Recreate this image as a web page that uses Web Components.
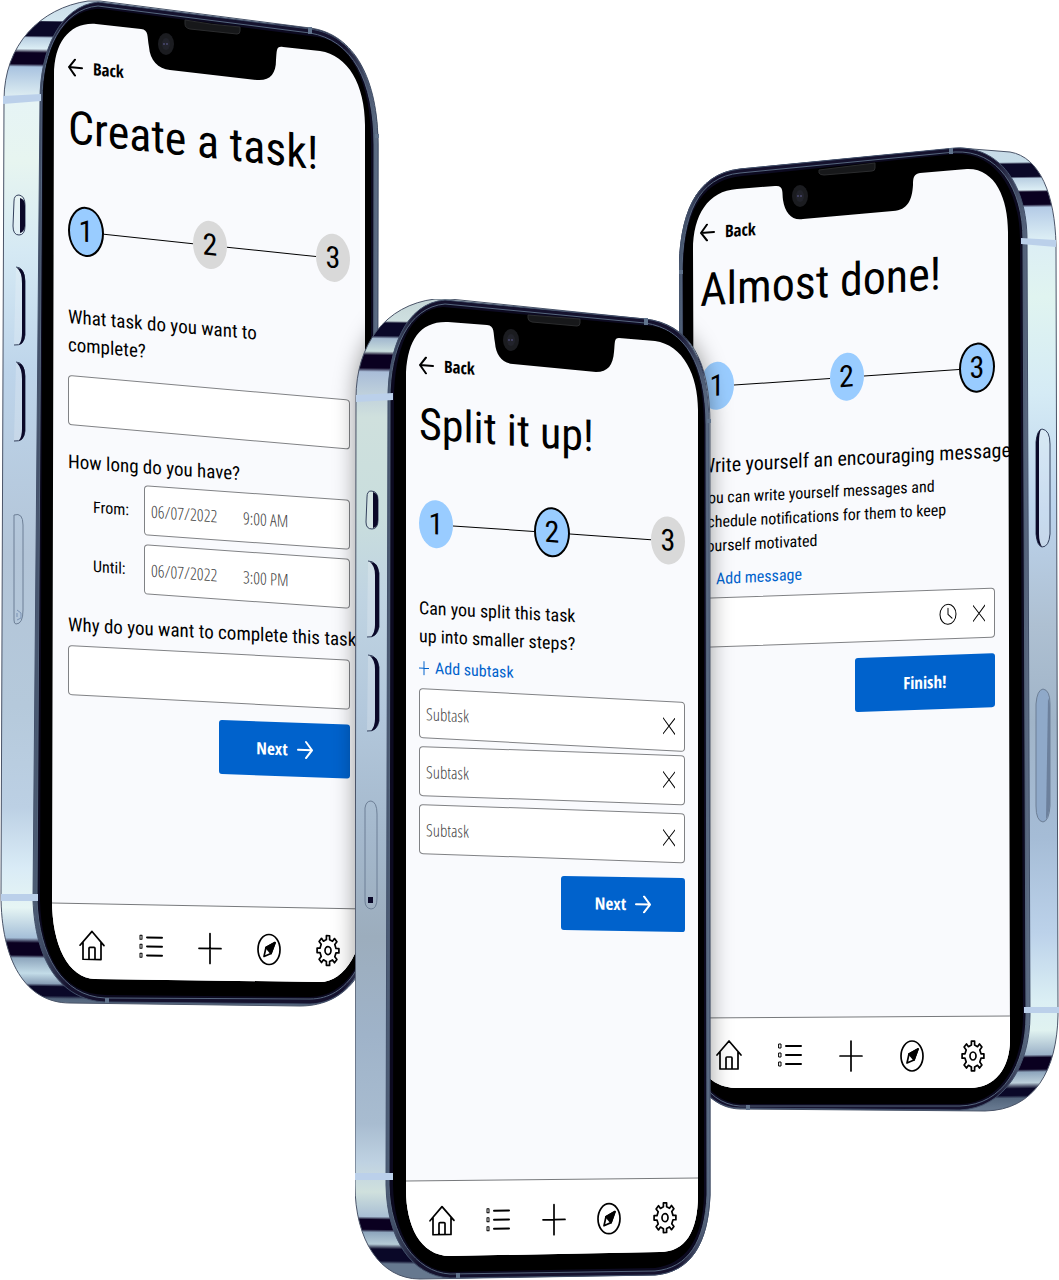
<!DOCTYPE html>
<html lang="en">
<head>
<meta charset="utf-8">
<meta name="viewport" content="width=device-width, initial-scale=1">
<title>Task planner – app screens</title>
<style>
  html, body { margin: 0; background: #fff; }
  body { font-family: "Roboto Condensed", "Open Sans", "Noto Sans", sans-serif; color: #000; }
</style>
</head>
<body>
<app-scene>
  <phone-mockup model="left" style="--q:19px">
    <back-link style="--gap:57px;--tilt:5deg"></back-link>
    <screen-title style="--gap:20px;--tilt:6deg">Create a task!</screen-title>
    <step-track current="1" done="0" style="--gap:48px;--tilt:6deg"></step-track>
    <question-text style="--gap:48px;--tilt:5deg">What task do you want to<br>complete?</question-text>
    <text-field label="What task do you want to complete?" style="--gap:16px;--tilt:5deg"></text-field>
    <question-text style="--gap:23px;--tilt:4deg">How long do you have?</question-text>
    <date-field label="From:" date="06/07/2022" time="9:00 AM" style="--gap:4px;--tilt:4deg"></date-field>
    <date-field label="Until:" date="06/07/2022" time="3:00 PM" style="--gap:9px;--tilt:4deg"></date-field>
    <question-text style="--gap:22px;--tilt:3deg">Why do you want to complete this task?</question-text>
    <text-field label="Why do you want to complete this task?" style="--gap:6px;--tilt:3deg"></text-field>
    <action-button arrow style="--gap:25px;--tilt:2deg;--w:131px">Next</action-button>
    <tab-bar slot="tabs" style="--tilt:1deg;--inset:12px;--inset-end:10px"></tab-bar>
  </phone-mockup>

  <phone-mockup model="right" style="--q:20px">
    <back-link style="--gap:76px;--tilt:-4deg"></back-link>
    <screen-title style="--gap:17px;--tilt:-4deg">Almost done!</screen-title>
    <step-track current="3" done="2" style="--gap:42px;--tilt:-4deg"></step-track>
    <question-text style="--gap:40px;--tilt:-3deg">Write yourself an encouraging message</question-text>
    <note-text style="--gap:7px;--tilt:-3deg">You can write yourself messages and<br>schedule notifications for them to keep<br>yourself motivated</note-text>
    <add-link style="--gap:11px;--tilt:-3deg">Add message</add-link>
    <text-field label="Message" clear clock style="--gap:8px;--tilt:-2deg"></text-field>
    <action-button style="--gap:10px;--tilt:-2deg;--w:140px">Finish!</action-button>
    <tab-bar slot="tabs" style="--tilt:0deg;--inset:17px;--inset-end:10px"></tab-bar>
  </phone-mockup>

  <phone-mockup model="middle" style="--q:18px;--t:44px">
    <back-link style="--gap:56px;--tilt:4deg"></back-link>
    <screen-title style="--gap:19px;--tilt:4deg">Split it up!</screen-title>
    <step-track current="2" done="1" style="--gap:44px;--tilt:4deg"></step-track>
    <question-text style="--gap:46px;--tilt:3deg">Can you split this task<br>up into smaller steps?</question-text>
    <add-link style="--gap:8px;--tilt:3deg">Add subtask</add-link>
    <text-field label="Subtask 1" hint="Subtask" clear style="--gap:10px;--tilt:3deg"></text-field>
    <text-field label="Subtask 2" hint="Subtask" clear style="--gap:8px;--tilt:2deg"></text-field>
    <text-field label="Subtask 3" hint="Subtask" clear style="--gap:8px;--tilt:2deg"></text-field>
    <action-button arrow style="--gap:22px;--tilt:1deg;--w:124px">Next</action-button>
    <tab-bar slot="tabs" style="--tilt:-1deg;--inset:11px;--inset-end:8px"></tab-bar>
  </phone-mockup>
</app-scene>

<script>
const HEAD = '"Roboto Condensed", "Liberation Sans Narrow", Roboto, sans-serif';
const BOLD = '"Open Sans Condensed", "Open Sans", sans-serif';
const LIGHT = '"Open Sans Condensed Light", "Open Sans Condensed", "Open Sans", sans-serif';
const ROW = `
  :host { display: block; margin-top: var(--gap, 0); transform: skewY(var(--tilt, 0deg)); transform-origin: 0 50%; }
  *, *::before { box-sizing: border-box; }
  button, input { font: inherit; color: inherit; background: none; border: 0; padding: 0; margin: 0; }
  svg { display: block; fill: none; stroke: currentColor; stroke-linecap: round; stroke-linejoin: round; }
`;
function define(name, render) {
  customElements.define(name, class extends HTMLElement {
    constructor() { super(); this.attachShadow({ mode: 'open' }); }
    connectedCallback() { this.shadowRoot.innerHTML = render(this); }
  });
}

define('app-scene', () => `
  <style>
    :host { display: block; position: relative; width: 100%; aspect-ratio: 1059 / 1280; overflow: hidden; }
  </style><slot></slot>`);

/* Device artwork: every path is given in scene coordinates. */
const MODELS = {
  left: {
    box: [0, 0, 380, 1008], pad: [68, 30], foot: 46, tone: 'a', shaded: true,
    body: 'M4 100C4 45 40 8 88 1L100 1L310 28C355 34 378 80 378 145L377 900C375 965 350 1006 300 1006L70 1003C25 1003 1 960 1 895Z',
    front: 'M40 100C40 50 60 6 98 2L310 29C355 35 377 80 378 145L377 900C375 960 350 1003 310 1004L105 1002C60 1000 35 960 33 900Z',
    rim: 'M42 100C42 50 62 9 98 6L310 33C352 40 374 80 374 145L373 900C371 960 348 999 310 999L105 998C62 996 39 955 37 900Z',
    black: 'M43 100C43 50 62 12 96 9C102 9 106 9 110 10L318 37C352 42 371 85 371 140L371 900C371 960 345 997 310 997L105 995C62 994 41 955 40 900Z',
    glass: 'M54 75C54 42 70 22 96 24L141 29C149 30 147 36 149 47C150 60 158 69 170 70L257 80C270 81 276 74 276 60C277 50 276 46 283 47L320 51C348 55 365 85 365 125L365 900C365 950 345 982 320 982L95 979C68 978 52 945 52 900Z',
    bar: 'M52 903L370 909V990H52Z', line: 'M52 903L365 909',
    speaker: 'M185 20Q211 25 240 27V31Q240 34 237 34L190 29Q185 28 185 24Z', cam: [166, 44],
    ants: ['M3 96L41 94V101L3 104Z', 'M1 894H38V901H1Z'], marks: ['M310 27v7', 'M375 136h4', 'M107 998v5'],
    keys: [['M14 201Q14 195 19 195Q25 196 25 205V226Q25 235 19 235Q13 235 13 226Z', 'M20 198Q25 199 25 206V226Q24 232 20 233Z'],
           ['M16 267Q24 267 25 281V335Q24 346 14 345', 'M17 268Q25 268 25 281V335Q24 344 19 345Q22 340 22 333V283Q22 272 17 268Z'],
           ['M16 362Q24 362 25 376V431Q24 442 14 441', 'M17 363Q25 363 25 376V431Q24 440 19 441Q22 436 22 429V379Q22 368 17 363Z']],
    slot: 'M14 515Q23 512 23 525V610Q23 624 16 624Q14 624 14 620Z', port: [17, 615]
  },
  middle: {
    box: [355, 299, 356, 981], pad: [64, 26], foot: 42, tone: 'b',
    body: 'M356 398C356 345 385 305 435 299L450 299L645 319C690 324 710 360 710 425L710 1195C708 1245 690 1272 655 1275L420 1279C380 1279 355 1240 355 1185Z',
    front: 'M388 398C388 350 405 303 445 300L645 319C688 324 709 360 709 425L710 1195C708 1245 690 1272 655 1275L450 1278C412 1276 387 1240 386 1185Z',
    rim: 'M390 398C390 350 408 307 445 304L645 323C686 329 706 365 706 425L707 1195C705 1242 688 1268 655 1271L450 1274C415 1272 390 1235 389 1185Z',
    black: 'M394 400C394 350 410 309 443 307L652 326C685 331 704 365 704 425L704 1195C703 1240 685 1264 655 1268L450 1272C415 1270 394 1235 393 1185Z',
    glass: 'M406 372C408 340 420 321 448 322L487 325C495 326 493 332 495 343C496 355 502 363 513 364L596 372C608 372 613 365 614 352C615 342 614 338 619 338L655 341C683 345 698 375 698 410L698 1195C698 1232 685 1252 660 1252L450 1256C420 1256 406 1225 406 1190Z',
    bar: 'M406 1181L698 1178V1258H406Z', line: 'M406 1181L698 1178',
    speaker: 'M528 315L580 319V323Q580 326 577 326L532 322Q528 321 528 318Z', cam: [511, 340],
    ants: ['M356 395L393 393V400L356 402Z', 'M355 1173H393V1180H355Z'], marks: ['M646 318v7', 'M707 421h4', 'M458 1273v5'],
    keys: [['M367 497Q367 491 371 491Q378 491 378 500V520Q378 529 372 529Q366 529 366 522Z', 'M373 492Q378 493 378 500V520Q378 527 373 528Z'],
           ['M368 561Q377 561 379 573V627Q377 638 367 637', 'M370 562Q378 562 379 573V627Q377 636 371 637Q375 632 375 625V575Q375 566 370 562Z'],
           ['M368 655Q377 655 379 667V721Q377 732 367 731', 'M370 656Q378 656 379 667V721Q377 730 371 731Q375 726 375 719V669Q375 660 370 656Z']],
    slot: 'M365 808Q366 801 371 801Q377 802 377 814V898Q377 909 371 909Q365 908 365 901Z', port: [370, 901]
  },
  right: {
    box: [679, 147, 380, 965], pad: [21, 64], foot: 40, tone: 'c', shaded: true,
    body: 'M679 275C679 215 695 174 740 169L960 148L1010 152C1040 157 1055 195 1056 245L1058 1015C1057 1070 1035 1110 985 1111L740 1109C700 1108 681 1060 681 1010Z',
    front: 'M679 275C679 215 695 174 740 169L955 148C1000 146 1027 185 1027 240L1030 1015C1030 1065 1005 1108 960 1110L740 1108C700 1108 681 1060 681 1010Z',
    rim: 'M682 275C682 215 698 177 740 173L955 152C998 150 1023 188 1023 240L1026 1015C1026 1065 1003 1105 960 1106L740 1106C703 1104 684 1060 684 1010Z',
    black: 'M683 275C683 215 700 180 742 176L955 154C995 152 1020 190 1020 240L1023 1015C1023 1065 1000 1103 960 1104L740 1104C705 1102 686 1060 686 1010Z',
    glass: 'M693 250C693 215 708 191 737 189L775 186C784 185 782 192 783 200C785 213 792 221 803 219L893 211C908 210 912 200 913 185C913 177 914 174 920 173L967 169C995 168 1008 198 1008 232L1010 1040C1010 1068 995 1088 970 1088L735 1088C715 1087 700 1075 696 1050Z',
    bar: 'M696 1018L1012 1016V1090H700Z', line: 'M696 1018L1010 1016',
    speaker: 'M819 170L875 163V168Q875 171 872 171L824 175Q820 175 819 173Z', cam: [800, 196],
    ants: ['M1021 238L1056 240V247L1021 244Z', 'M1024 1007H1059V1013H1024Z'], marks: ['M951 148v6', 'M679 272h4', 'M748 1105v5'],
    keys: [['M1042 429Q1050 430 1050 444V534Q1049 547 1042 547Q1037 546 1036 534V442Q1037 430 1042 429Z', 'M1041 429Q1037 432 1036 442V534Q1037 545 1042 547Q1039 542 1039 534V442Q1039 434 1041 429Z']],
    slot: 'M1036 704Q1037 690 1043 689Q1050 690 1050 704V806Q1049 821 1043 822Q1036 821 1036 806Z', solid: true
  }
};
const CHROME = {
  a: [['0','#c9dbe8'],['.02','#d3e6ef'],['.021','#0a0828'],['.035','#0a0828'],['.037','#b9cfe2'],['.048','#dceef5'],['.052','#0a0020'],['.063','#0a0020'],['.066','#a9c3e0'],['.1','#e6f4f5'],['.16','#e7f5f0'],['.25','#d5e9f4'],['.37','#bdd4ea'],['.55','#b3c5d8'],['.7','#b5c9db'],['.8','#bcd0e4'],['.86','#d9ebf6'],['.9','#e6f5f4'],['.93','#a5bfd8'],['.935','#0a0020'],['.947','#0a0020'],['.95','#8ea6bd'],['.965','#c3dce8'],['.975','#8aa0b8'],['.978','#0a0828'],['.987','#0a0828'],['.99','#53657c'],['1','#66788f']],
  b: [['0','#c5d6d8'],['.022','#cfe0e0'],['.024','#0a0828'],['.037','#0a0828'],['.04','#a3b9cf'],['.053','#c9dddd'],['.057','#0a0020'],['.07','#0a0020'],['.074','#a9bdd8'],['.1','#c2d3dc'],['.12','#cfe0dd'],['.22','#c9dedd'],['.3','#c0d4e2'],['.42','#b3c8dc'],['.55','#a4b8cc'],['.65','#9cadbd'],['.75','#9fb3c9'],['.84','#a8bcd0'],['.88','#bfd2e2'],['.91','#cfe0dd'],['.935','#a9bfd4'],['.938','#0a0020'],['.948','#0a0020'],['.951','#8ea6bd'],['.963','#b5cbd6'],['.968','#0a0828'],['.98','#0a0828'],['.983','#66788f'],['1','#66788f']],
  c: [['0','#c9dbe8'],['.02','#c6dce8'],['.022','#0a0828'],['.035','#0a0828'],['.037','#b9cfe2'],['.049','#dceef5'],['.051','#0a0020'],['.064','#0a0020'],['.067','#b4cbe6'],['.1','#dceef5'],['.16','#e0f4f0'],['.26','#d5ebf5'],['.38','#bcd3ec'],['.5','#aec0d2'],['.6','#a0b4c8'],['.72','#a5bcd6'],['.82','#bcd2ea'],['.89','#dbeff4'],['.92','#e0f2f0'],['.945','#9cb2c8'],['.948','#0a0020'],['.96','#0a0020'],['.963','#8ea6bd'],['.974','#bccfda'],['.98','#0a0828'],['.987','#0a0828'],['.99','#53657c'],['1','#66788f']]
};

define('phone-mockup', el => {
  const m = MODELS[el.getAttribute('model')], [x, y, w, h] = m.box;
  const view = `viewBox="${m.box.join(' ')}"`;
  const tilt = m.tone === 'c' ? 12 : -12;
  const [cx, cy] = m.cam;
  return `
  <style>
    :host { position: absolute; isolation: isolate; display: grid; left: ${x / 10.59}%; top: ${y / 12.8}%; width: ${w / 10.59}%; height: ${h / 12.8}%; }
    .art, .ui, .shade { grid-area: 1 / 1; min-width: 0; min-height: 0; }
    svg { display: block; width: 100%; height: 100%; pointer-events: none; }
    .ui { display: flex; flex-direction: column; z-index: 1; padding: 0 ${m.pad[1]}px ${m.foot}px ${m.pad[0]}px; }
    .shade { z-index: 2; }
    .tabs { margin-top: auto; }
  </style>
  <svg class="art" ${view} aria-hidden="true">
    <defs>
      <linearGradient id="chrome" gradientUnits="userSpaceOnUse" x1="${x}" y1="${y}" x2="${x + tilt}" y2="${y + h}">
        ${CHROME[m.tone].map(([o, c]) => `<stop offset="${o}" stop-color="${c}"/>`).join('')}
      </linearGradient>
      <linearGradient id="edge"><stop offset="0" stop-color="#4f6078"/><stop offset=".1" stop-color="#15122e"/><stop offset=".9" stop-color="#15122e"/><stop offset="1" stop-color="#5f7088"/></linearGradient>
      <clipPath id="pane"><path d="${m.glass}"/></clipPath>
    </defs>
    <path d="${m.body}" fill="url(#chrome)" stroke="#4a5468" stroke-width="1"/>
    <path d="${m.front}" fill="url(#edge)" stroke="#42506a" stroke-width="1"/>
    <path d="${m.rim}" fill="#0c0a20" stroke="#56677e" stroke-width="1"/>
    <path d="${m.black}" fill="#000"/>
    ${m.ants.map(d => `<path d="${d}" fill="#bbd0ea"/>`).join('')}
    ${m.marks.map(d => `<path d="${d}" stroke="#60738c" stroke-width="4"/>`).join('')}
    <path d="${m.glass}" fill="#f9fafd"/>
    <g clip-path="url(#pane)"><path d="${m.bar}" fill="#fff"/><path d="${m.line}" fill="none" stroke="#77797c" stroke-width="1"/></g>
    <path d="${m.speaker}" fill="#17181a" stroke="#2b2c2e" stroke-width="1"/>
    <ellipse cx="${cx}" cy="${cy}" rx="8" ry="11" fill="#1b1c20"/>
    <ellipse cx="${cx}" cy="${cy}" rx="4" ry="6" fill="#22232b"/>
    <circle cx="${cx - 2}" cy="${cy}" r="1" fill="#4a4a70"/><circle cx="${cx + 1}" cy="${cy}" r="1" fill="#4a4a70"/>
    ${m.keys.map(([a, b]) => `<path d="${a}" fill="#ffffff33" stroke="#33405c" stroke-width="1"/><path d="${b}" fill="#0a0828"/>`).join('')}
    <path d="${m.slot}" fill="${m.solid ? '#8fa9c9' : 'none'}" stroke="#6d7f96" stroke-width="1"/>
    ${m.solid ? '<path d="M1048 698Q1050 702 1050 708V804Q1049 816 1046 819Z" fill="#6c809c"/>' : ''}
    ${m.port ? (m.tone === 'b'
      ? `<rect x="${m.port[0] - 2}" y="${m.port[1] - 4}" width="5" height="6" fill="#0a0828"/>`
      : `<path d="M${m.port[0]} ${m.port[1] - 5}l4 3v5l-4 2M${m.port[0]} ${m.port[1] - 2}v4" fill="none" stroke="#7b93b5"/>`) : ''}
  </svg>
  <div class="ui"><slot></slot><div class="tabs"><slot name="tabs"></slot></div></div>
  ${m.shaded ? `<svg class="shade" ${view} aria-hidden="true">
    <defs>
      <filter id="soft" x="-20%" y="-10%" width="140%" height="120%"><feGaussianBlur stdDeviation="11"/></filter>
      <clipPath id="cut"><path d="${m.glass}"/></clipPath>
    </defs>
    <g clip-path="url(#cut)"><path d="${MODELS.middle.body}" fill="#000" fill-opacity=".4" filter="url(#soft)"/></g></svg>` : ''}`;
});

define('back-link', () => `
  <style>${ROW}
    button { display: flex; align-items: center; gap: 10px; height: 20px; font: 700 17px/20px ${BOLD}; }
    svg { stroke-width: 2; }
  </style>
  <button type="button"><svg width="15" height="18" viewBox="0 0 15 18" aria-hidden="true"><path d="M14 9H1M7 1L1 9L7 17"/></svg>Back</button>`);

define('screen-title', () => `
  <style>${ROW} h1 { margin: 0; font: 400 var(--t, 46px)/60px ${HEAD}; white-space: nowrap; }</style>
  <h1><slot></slot></h1>`);

define('step-track', el => {
  const cur = +el.getAttribute('current'), done = +el.getAttribute('done');
  return `
  <style>${ROW}
    ol { display: flex; align-items: center; list-style: none; margin: 0; padding: 0; height: 50px; }
    li { display: grid; place-items: center; width: 34px; height: 48px; border-radius: 50%; background: #d9d9d9; font: 400 30px/46px ${HEAD}; }
    li.on { background: #99ccff; }
    li.now { width: 36px; height: 50px; border: 2px solid #000; }
    span { flex: 1; height: 1px; background: #000; }
  </style>
  <ol>${[1, 2, 3].map(n => `${n > 1 ? '<span role="presentation"></span>' : ''}<li class="${n <= done || n === cur ? 'on' : ''} ${n === cur ? 'now' : ''}">${n}</li>`).join('')}</ol>`;
});

define('question-text', () => `
  <style>${ROW} p { margin: 0; font: 400 var(--q, 19px)/28px ${HEAD}; white-space: nowrap; }</style>
  <p><slot></slot></p>`);

define('note-text', () => `
  <style>${ROW} p { margin: 0; font-size: 16px; line-height: 24px; white-space: nowrap; }</style>
  <p><slot></slot></p>`);

define('add-link', () => `
  <style>${ROW}
    button { display: flex; align-items: center; gap: 6px; height: 20px; font-size: 16px; line-height: 20px; color: #0062cc; }
    svg { stroke-width: 1; }
  </style>
  <button type="button"><svg width="10" height="14" viewBox="0 0 10 14" aria-hidden="true"><path d="M0 7H10M5 0V14"/></svg><slot></slot></button>`);

define('text-field', el => `
  <style>${ROW}
    .box { display: flex; align-items: center; gap: 16px; height: 50px; padding: 0 9px 0 6px; background: #fff; border: 1px solid #808285; border-radius: 4px; }
    input { flex: 1; min-width: 0; height: 100%; font: 300 17px ${LIGHT}; }
    input::placeholder { color: #444; opacity: 1; }
    svg { stroke-width: 1; }
  </style>
  <div class="box"><input type="text" aria-label="${el.getAttribute('label')}" placeholder="${el.getAttribute('hint') || ''}">
  ${el.hasAttribute('clock') ? '<button type="button" aria-label="Schedule"><svg width="18" height="22" viewBox="0 0 18 22"><ellipse cx="9" cy="11" rx="8" ry="10"/><path d="M9 5V11L13 15"/></svg></button>' : ''}
  ${el.hasAttribute('clear') ? '<button type="button" aria-label="Remove"><svg width="12" height="18" viewBox="0 0 12 18"><path d="M0 1L12 17M12 1L0 17"/></svg></button>' : ''}
  </div>`);

define('date-field', el => `
  <style>${ROW}
    .row { display: flex; align-items: center; height: 50px; }
    label { width: 76px; padding-left: 25px; font-size: 16px; }
    .box { flex: 1; min-width: 0; display: flex; align-items: center; gap: 20px; height: 50px; padding: 0 6px; background: #fff; border: 1px solid #808285; border-radius: 4px; }
    input { width: 72px; font: 300 17px ${LIGHT}; color: #444; }
  </style>
  <div class="row"><label for="d">${el.getAttribute('label')}</label>
  <div class="box"><input id="d" type="text" value="${el.getAttribute('date')}"><input type="text" aria-label="Time" value="${el.getAttribute('time')}"></div></div>`);

define('action-button', el => `
  <style>${ROW}
    :host { align-self: flex-end; }
    button { display: flex; align-items: center; justify-content: center; gap: 9px; width: var(--w, 130px); height: 54px; border-radius: 3px; background: #0062cc; color: #fff; font: 700 17px/24px ${BOLD}; }
    svg { stroke-width: 2; }
  </style>
  <button type="button"><slot></slot>${el.hasAttribute('arrow') ? '<svg width="16" height="18" viewBox="0 0 16 18" aria-hidden="true"><path d="M1 9H15M9 1L15 9L9 17"/></svg>' : ''}</button>`);

function gear() {
  const pts = [];
  for (let i = 0; i < 8; i++) {
    const a = i * Math.PI / 4;
    for (const [d, r] of [[-.2, .74], [-.15, 1], [.15, 1], [.2, .74]])
      pts.push((12 + Math.sin(a + d) * 11 * r).toFixed(1) + ' ' + (16 - Math.cos(a + d) * 15 * r).toFixed(1));
  }
  return 'M' + pts.join('L') + 'Z';
}
const TABS = [
  ['Home', '<path d="M0 15L12 1L24 15M3 12V29H21V12M9 29V18Q9 17 10 17H14Q15 17 15 18V29"/>'],
  ['Tasks', '<path d="M8 6H23M8 15H23M8 24H23" stroke-width="2"/><path d="M1 4H3V8H1ZM1 13H3V17H1ZM1 22H3V26H1Z" stroke-width="1"/>'],
  ['Add', '<path d="M1 16H23M12 1V31"/>'],
  ['Explore', '<ellipse cx="12" cy="16" rx="11" ry="15"/><path d="M18 9L14 20L7 23L9 14Z"/><path d="M18 9L14 20L9 14Z" fill="#000"/>'],
  ['Settings', `<path d="${gear()}"/><ellipse cx="12" cy="16" rx="3" ry="4"/>`]
];
define('tab-bar', () => `
  <style>${ROW}
    nav { display: flex; justify-content: space-between; padding: 0 var(--inset-end, 10px) 0 var(--inset, 12px); }
    svg { stroke-width: 1.7; overflow: visible; }
  </style>
  <nav aria-label="Main">${TABS.map(([n, p]) => `<button type="button" aria-label="${n}"><svg width="24" height="32" viewBox="0 0 24 32">${p}</svg></button>`).join('')}</nav>`);
</script>
</body>
</html>
